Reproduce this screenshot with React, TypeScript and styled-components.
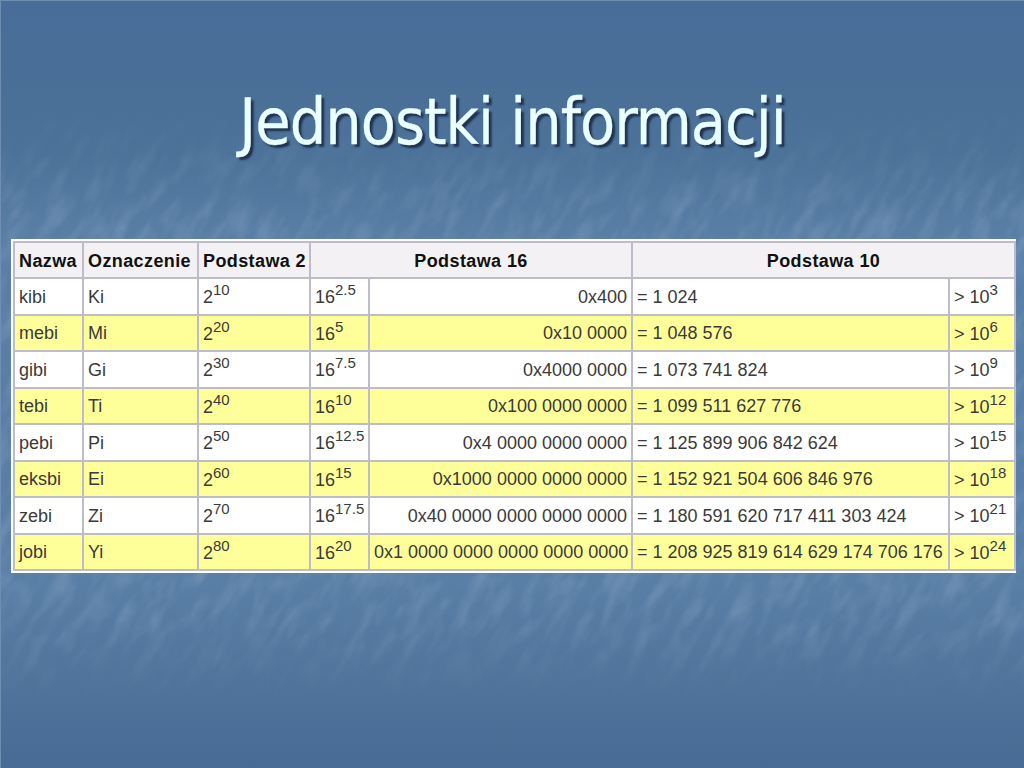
import React from 'react';
import styled, { createGlobalStyle } from 'styled-components';

const GlobalStyle = createGlobalStyle`
  html, body {
    margin: 0;
    padding: 0;
    width: 1024px;
    height: 768px;
    overflow: hidden;
    background: #4a6f99;
  }
`;

const Slide = styled.div`
  position: relative;
  width: 1024px;
  height: 768px;
  overflow: hidden;
  box-sizing: border-box;
  padding: 0 0 0 10px;
  border-left: 1px solid #6f8fb2;
  border-top: 1px solid #6f8fb2;
  background: linear-gradient(180deg, #476d98 0%, #4c7299 20%, #5a7fa7 31%, #5a7fa7 76%, #50749c 88%, #476b94 100%);
`;

const Texture = styled.svg`
  position: absolute;
  inset: 0;
  width: 100%;
  height: 100%;
  mask-image: linear-gradient(180deg, transparent 110px, #000 215px, #000 620px, transparent 700px);
`;

const Content = styled.div`
  position: relative;
  display: flex;
  flex-direction: column;
`;

const Title = styled.h1`
  margin: 78px 0 0 -10px;
  height: 160px;
  font-family: 'DejaVu Sans Condensed', 'DejaVu Sans', sans-serif;
  font-size: 64px;
  letter-spacing: -1px;
  line-height: 86px;
  font-weight: 400;
  text-align: center;
  color: #eaffff;
  -webkit-text-stroke: 0.3px #eaffff;
  text-shadow: 3px 3px 2px #1f3350;
`;

const TableFrame = styled.div`
  width: 1005px;
  height: 334px;
  box-sizing: border-box;
  padding: 2px;
  background: #fff;
`;

const Table = styled.table`
  width: 1001px;
  height: 330px;
  table-layout: fixed;
  border-collapse: collapse;
  font-family: 'Liberation Sans', Arial, sans-serif;
  font-size: 18px;
  color: #3a3a3a;
  border: 2px solid #bcbcca;
`;

const Head = styled.th<{ $left?: boolean }>`
  height: 36px;
  padding: 3px 4px 0;
  box-sizing: border-box;
  background: #f3f1f3;
  border: 2px solid #bcbcca;
  color: #111;
  font-size: 18px;
  font-weight: 700;
  letter-spacing: 0.4px;
  white-space: nowrap;
  overflow: hidden;
  text-align: ${(p) => (p.$left ? 'left' : 'center')};
`;

const Row = styled.tr<{ $yellow: boolean }>`
  background: ${(p) => (p.$yellow ? '#ffff99' : '#ffffff')};
`;

const Cell = styled.td`
  height: 35px;
  padding: 2px 4px 0;
  box-sizing: border-box;
  border: 2px solid #bcbcca;
  white-space: nowrap;
  text-align: left;
`;

const HexCell = styled(Cell)`
  text-align: right;
`;

const Power = styled.span`
  vertical-align: -1px;
  sup {
    font-size: 15px;
    line-height: 0;
    vertical-align: 8px;
  }
`;

const rows = [
  ['kibi', 'Ki', '10', '2.5', '0x400', '= 1 024', '3'],
  ['mebi', 'Mi', '20', '5', '0x10 0000', '= 1 048 576', '6'],
  ['gibi', 'Gi', '30', '7.5', '0x4000 0000', '= 1 073 741 824', '9'],
  ['tebi', 'Ti', '40', '10', '0x100 0000 0000', '= 1 099 511 627 776', '12'],
  ['pebi', 'Pi', '50', '12.5', '0x4 0000 0000 0000', '= 1 125 899 906 842 624', '15'],
  ['eksbi', 'Ei', '60', '15', '0x1000 0000 0000 0000', '= 1 152 921 504 606 846 976', '18'],
  ['zebi', 'Zi', '70', '17.5', '0x40 0000 0000 0000 0000', '= 1 180 591 620 717 411 303 424', '21'],
  ['jobi', 'Yi', '80', '20', '0x1 0000 0000 0000 0000 0000', '= 1 208 925 819 614 629 174 706 176', '24'],
];

const widths = [69, 115, 112, 59, 263, 317, 66];

export default function App() {
  return (
    <>
      <GlobalStyle />
      <Slide>
        <Texture aria-hidden="true">
          <filter id="marble" x="0" y="0" width="100%" height="100%">
            <feTurbulence type="fractalNoise" baseFrequency="0.08 0.025" numOctaves="5" seed="11" />
            <feColorMatrix
              type="matrix"
              values="0 0 0 0 0.75  0 0 0 0 0.82  0 0 0 0 0.92  1.6 0 0 0 -0.66"
            />
            <feGaussianBlur stdDeviation="0.8" />
          </filter>
          <g transform="rotate(30 512 384)">
            <rect x="-300" y="-300" width="1700" height="1400" filter="url(#marble)" opacity="0.2" />
          </g>
        </Texture>
        <Content>
          <Title>Jednostki informacji</Title>
          <TableFrame>
            <Table>
              <colgroup>
                {widths.map((w, i) => (
                  <col key={i} style={{ width: w }} />
                ))}
              </colgroup>
              <thead>
                <tr>
                  <Head $left>Nazwa</Head>
                  <Head $left>Oznaczenie</Head>
                  <Head $left>Podstawa 2</Head>
                  <Head colSpan={2}>Podstawa 16</Head>
                  <Head colSpan={2}>Podstawa 10</Head>
                </tr>
              </thead>
              <tbody>
                {rows.map((r, i) => (
                  <Row key={r[0]} $yellow={i % 2 === 1}>
                    <Cell>{r[0]}</Cell>
                    <Cell>{r[1]}</Cell>
                    <Cell>
                      <Power>
                        2<sup>{r[2]}</sup>
                      </Power>
                    </Cell>
                    <Cell>
                      <Power>
                        16<sup>{r[3]}</sup>
                      </Power>
                    </Cell>
                    <HexCell>{r[4]}</HexCell>
                    <Cell>{r[5]}</Cell>
                    <Cell>
                      <Power>
                        &gt; 10<sup>{r[6]}</sup>
                      </Power>
                    </Cell>
                  </Row>
                ))}
              </tbody>
            </Table>
          </TableFrame>
        </Content>
      </Slide>
    </>
  );
}
